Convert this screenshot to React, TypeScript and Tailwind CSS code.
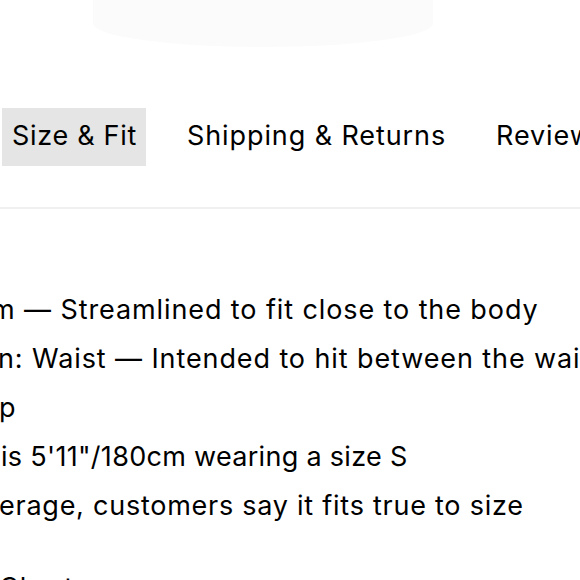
const lines = [
  { text: 'm — Streamlined to fit close to the body', indent: 'ml-[-9px]' },
  { text: 'n: Waist — Intended to hit between the waist and', indent: 'ml-[-2px]' },
  { text: 'p', indent: 'ml-[-1px]' },
  { text: 'is 5\'11"/180cm wearing a size S', indent: 'ml-[1px] tracking-[0.3px]' },
  { text: 'erage, customers say it fits true to size', indent: 'ml-[-1px] tracking-[0.75px]' },
]

export default function App() {
  return (
    <div className="w-[580px] h-[580px] overflow-hidden bg-white text-black font-['Inter','Noto_Sans',sans-serif] tracking-[0.9px]">
      {/* faint product shadow at the top */}
      <div className="ml-[93px] w-[340px] h-[47px] rounded-b-[50%] bg-[#fbfbfb]" />

      {/* tabs */}
      <div className="mt-[61px] flex items-center gap-[31px] whitespace-nowrap text-[27px] leading-none">
        <div className="ml-[2px] w-[144px] h-[58px] shrink-0 flex items-center px-[10px] pb-[3px] bg-[#e5e5e5] tracking-[0.7px]">Size &amp; Fit</div>
        <div className="w-[278px] shrink-0 px-[10px] pb-[3px]">Shipping &amp; Returns</div>
        <div className="shrink-0 px-[10px] pb-[3px]">Reviews</div>
      </div>

      <div className="mt-[41px] h-[2px] bg-[#f0f0f0]" />

      {/* size & fit details */}
      <ul className="mt-[76px] text-[27px] leading-[49px] whitespace-nowrap">
        {lines.map((l) => (
          <li key={l.text} className={l.indent}>{l.text}</li>
        ))}
        <li className="mt-[33px] ml-[-67px]">Size Chart</li>
      </ul>
    </div>
  )
}
